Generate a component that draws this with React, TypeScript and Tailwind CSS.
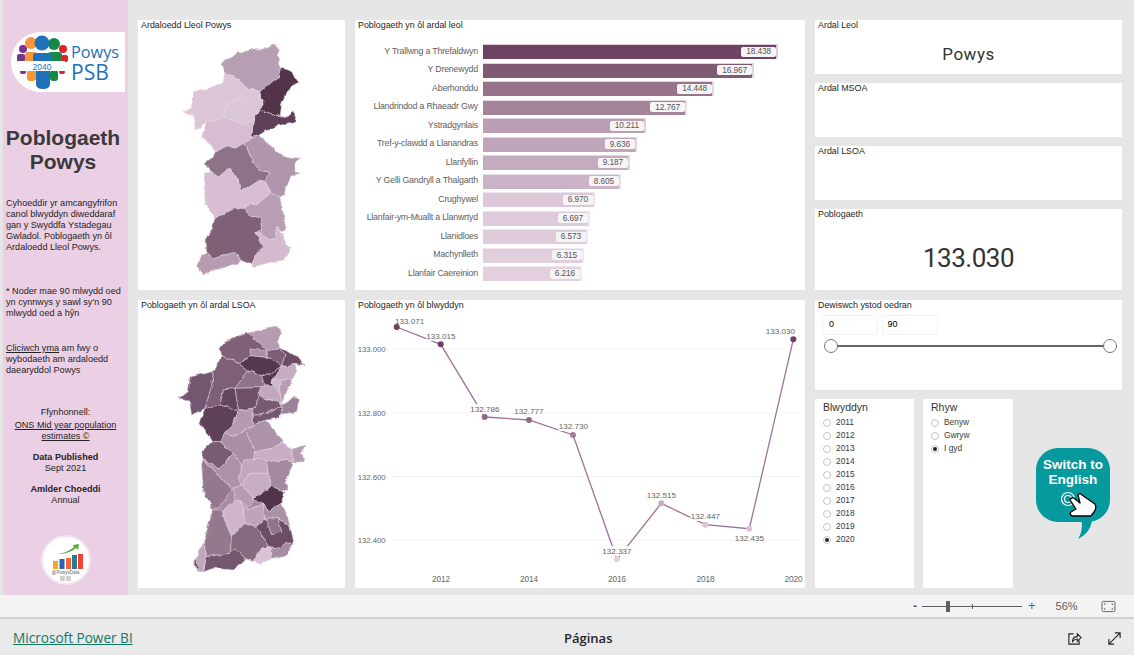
const FONT = "font-['Liberation_Sans',Arial,sans-serif]";

const bars = [
  { name: "Y Trallwng a Threfaldwyn", value: "18.438", end: 295, color: "bg-[#6f4263]", edge: "border-[#dccfd8]" },
  { name: "Y Drenewydd", value: "16.967", end: 271, color: "bg-[#7e5a73]", edge: "border-[#e0d4dd]" },
  { name: "Aberhonddu", value: "14.448", end: 231, color: "bg-[#967389]", edge: "border-[#e4d9e1]" },
  { name: "Llandrindod a Rhaeadr Gwy", value: "12.767", end: 204, color: "bg-[#a58399]", edge: "border-[#e8dfe5]" },
  { name: "Ystradgynlais", value: "10.211", end: 163, color: "bg-[#ba9fb4]", edge: "border-[#e0cfdc]" },
  { name: "Tref-y-clawdd a Llanandras", value: "9.636", end: 154, color: "bg-[#bfa6ba]", edge: "border-[#e2d3de]" },
  { name: "Llanfyllin", value: "9.187", end: 147, color: "bg-[#c4acbf]", edge: "border-[#e4d6e1]" },
  { name: "Y Gelli Gandryll a Thalgarth", value: "8.605", end: 138, color: "bg-[#cab3c6]", edge: "border-[#e7dbe5]" },
  { name: "Crughywel", value: "6.970", end: 112, color: "bg-[#dcc8d8]", edge: "border-[#eee4ec]" },
  { name: "Llanfair-ym-Muallt a Llanwrtyd", value: "6.697", end: 107, color: "bg-[#dfcbdb]", edge: "border-[#efe6ed]" },
  { name: "Llanidloes", value: "6.573", end: 105, color: "bg-[#e0cddc]", edge: "border-[#f0e7ee]" },
  { name: "Machynlleth", value: "6.315", end: 101, color: "bg-[#e1cfdd]", edge: "border-[#f0e8ee]" },
  { name: "Llanfair Caereinion", value: "6.216", end: 99, color: "bg-[#e2d0de]", edge: "border-[#f1e9ef]" },
];

const outline1 =
  "155,70 165,58 195,45 200,38 235,35 245,25 275,28 295,22 315,15 328,30 322,45 330,60 325,70 332,85 345,88 365,95 375,115 390,125 370,135 355,150 345,165 335,195 330,225 345,232 360,225 370,212 378,222 375,245 345,252 320,258 290,270 265,287 290,305 330,345 365,355 392,350 375,370 375,395 392,400 365,405 350,440 345,465 330,475 335,495 345,540 350,570 335,575 320,562 340,585 345,605 362,625 340,660 290,670 250,680 245,672 210,660 205,670 165,680 120,695 100,705 80,680 95,645 110,640 108,600 125,570 135,535 105,490 103,400 125,395 105,368 130,350 135,335 120,310 95,290 110,245 78,270 68,225 38,215 65,205 68,155 110,150 160,125 165,97";

const map1 = [
  ["#b69fb3", "155,70 165,58 195,45 200,38 235,35 245,25 275,28 295,22 315,15 328,30 322,45 330,60 325,70 332,85 325,115 290,140 272,155 235,145 205,120 165,97"],
  ["#533349", "332,85 345,88 365,95 375,115 390,125 370,135 355,150 345,165 335,195 330,228 300,220 268,208 280,185 268,155 290,140 325,115"],
  ["#5f4059", "268,208 300,220 330,230 345,232 360,225 370,212 378,222 375,245 345,252 320,258 290,270 265,287 245,295 250,240"],
  ["#dbc5d6", "38,215 65,205 68,155 110,150 160,125 165,97 205,120 235,145 205,175 170,195 158,235 110,245 78,270 68,225"],
  ["#dcc7d8", "235,145 272,155 268,155 280,185 268,208 250,240 215,257 190,240 158,235 170,195 205,175"],
  ["#d8bdd2", "95,290 110,245 158,235 190,240 215,257 250,240 245,295 225,310 195,325 175,318 135,335 120,310"],
  ["#8e7288", "105,368 130,350 135,335 175,318 195,325 225,310 250,370 270,390 300,398 285,425 270,420 240,440 210,455 205,420 180,385 165,395 145,412 125,395"],
  ["#b096ad", "225,310 245,295 265,287 290,305 330,345 365,355 392,350 375,370 375,395 392,400 365,405 350,440 345,465 330,475 303,457 285,425 300,398 270,390 250,370"],
  ["#d8bed4", "103,400 125,395 145,412 165,395 180,385 205,420 210,455 240,440 270,420 285,425 303,457 260,495 245,490 220,505 195,505 135,535 105,490"],
  ["#b89fb5", "220,505 245,490 260,495 303,457 330,475 335,495 345,540 350,570 335,575 320,562 315,595 295,600 270,580 255,578 275,570 270,530 240,530"],
  ["#7f6077", "135,535 195,505 220,505 240,530 270,530 275,570 255,578 282,620 262,640 245,672 210,660 200,642 175,642 130,658 110,640 108,600 125,570"],
  ["#d4b9cf", "255,578 270,580 295,600 315,595 320,562 340,585 345,605 362,625 340,660 290,670 250,680 245,672 262,640 282,620"],
  ["#b59cb1", "95,645 110,640 130,658 175,642 200,642 210,660 205,670 165,680 120,695 100,705 80,680"],
];

const outline2 =
  "150,70 170,45 225,25 232,25 270,15 325,5 335,25 322,50 330,70 345,75 360,85 385,95 402,120 375,115 380,140 365,165 360,185 345,205 335,240 375,215 388,225 380,260 335,268 320,280 290,285 330,340 345,355 365,375 405,360 395,385 405,410 370,412 345,475 355,495 335,497 345,505 330,535 350,565 360,605 372,655 345,695 305,700 270,715 250,710 225,700 190,735 130,730 100,740 85,740 70,720 85,680 100,655 125,565 130,555 100,500 95,420 100,405 95,380 125,350 120,335 88,290 105,250 65,270 58,225 25,220 55,200 60,155 125,140 130,140 155,92";

const map2 = [
  ["#b59cb1", "232,25 270,15 325,5 335,25 322,50 330,70 290,78 270,58"],
  ["#7f6077", "150,70 170,45 232,25 270,58 290,78 240,90 205,115 155,92"],
  ["#ab90a8", "240,72 290,78 295,98 240,92"],
  ["#7d5c75", "290,78 330,70 345,90 335,122 310,105 295,98"],
  ["#6c4d66", "330,70 345,75 360,85 385,95 402,120 375,115 355,125 335,122 345,90"],
  ["#563850", "205,115 240,92 295,98 310,105 335,122 300,150 275,152 235,138"],
  ["#7e5f77", "155,92 205,115 235,138 210,170 195,190 160,195 150,240 105,250 125,180 130,140"],
  ["#745670", "60,155 130,140 125,180 105,250 65,270 58,225 25,220 55,200"],
  ["#8f738a", "235,138 275,152 285,180 275,188 195,190 210,170"],
  ["#563850", "275,152 300,150 335,122 320,150 305,165 310,185 285,180"],
  ["#c4acc1", "320,150 335,122 355,125 375,115 380,140 365,165 335,165 305,165"],
  ["#cdb7cb", "305,165 335,165 330,205 320,195 310,185"],
  ["#b79cb3", "335,165 365,165 360,185 345,205 335,240 330,205"],
  ["#c0a8bf", "265,195 285,180 310,185 320,195 330,205 335,240 320,225 290,225 265,210"],
  ["#6e4f68", "195,190 275,188 265,195 265,210 260,240 245,250 205,258"],
  ["#64455f", "160,195 195,190 205,258 150,240"],
  ["#785a72", "245,250 260,240 265,210 290,225 320,225 335,245 310,255 270,270 250,270"],
  ["#775871", "250,300 250,270 270,270 310,255 335,245 335,268 320,280 290,285"],
  ["#9c819a", "335,268 335,240 375,215 388,225 380,260"],
  ["#5f4059", "88,290 105,250 150,240 205,258 190,300 165,325 150,350 125,350 120,335"],
  ["#b49bb1", "205,258 245,250 250,300 225,315 195,335 165,325 190,300"],
  ["#ae94aa", "225,315 250,300 290,285 330,340 345,355 340,352 305,370 255,380"],
  ["#a98fa6", "150,350 165,325 195,335 225,315 255,380 250,405 225,405 215,420 190,385"],
  ["#7a5c73", "95,380 125,350 150,350 190,385 150,432 100,405"],
  ["#c7aec5", "255,380 305,370 340,352 365,375 370,412 345,405 290,410 265,400 250,405"],
  ["#b69cb3", "365,375 405,360 395,385 405,410 370,412"],
  ["#93788e", "95,420 100,405 125,430 150,460 190,490 150,545 130,555 100,500"],
  ["#ad93aa", "100,405 150,432 190,385 215,420 205,460 215,480 190,490 150,460 125,430"],
  ["#c2a8bf", "205,460 215,420 225,405 250,405 265,400 290,410 295,445 240,445 215,480"],
  ["#a38aa0", "290,410 345,405 370,412 345,475 355,495 335,497 305,482 295,445"],
  ["#c7aec6", "240,445 295,445 305,482 280,505 250,522 240,505 225,495 215,480"],
  ["#533349", "250,522 305,482 345,505 330,535 300,560 280,535"],
  ["#b69cb3", "190,490 215,480 225,495 240,505 250,522 235,555 215,525 195,525"],
  ["#cfb5cc", "155,555 195,525 215,525 225,595 185,635 165,590"],
  ["#bda4ba", "225,595 215,525 235,555 280,535 285,580 260,605"],
  ["#ab91a7", "300,560 330,535 350,565 360,605 325,578 285,580 280,535"],
  ["#8f7389", "285,580 325,578 335,620 305,630"],
  ["#6c4d66", "260,605 285,580 305,630 335,620 325,578 360,605 372,655 345,655 330,670 295,665"],
  ["#93788e", "130,555 155,555 165,590 185,635 180,685 110,695 100,655 125,565"],
  ["#866a80", "185,635 225,595 260,605 295,665 275,670 250,710 225,700 195,670 180,685"],
  ["#d9c3d6", "250,710 275,670 295,665 305,670 305,700 270,715"],
  ["#a58ca2", "295,665 330,670 345,655 372,655 345,695 305,700 305,670"],
  ["#765770", "110,695 180,685 195,670 225,700 190,735 130,730 100,740"],
  ["#bfa8bc", "85,680 100,655 110,695 100,740 85,740 70,720"],
  ["#5f4059", "80,700 85,740 72,715"],
];

const points = [
  { x: 396.7, y: 327, label: "133.071", lx: 409.7, ly: 321, color: "#6c4263" },
  { x: 440.7, y: 344.3, label: "133.015", lx: 441, ly: 336, color: "#6c4263" },
  { x: 484.7, y: 417, label: "132.786", lx: 485, ly: 409, color: "#8e6a85" },
  { x: 529, y: 420, label: "132.777", lx: 529, ly: 411, color: "#8e6a85" },
  { x: 573, y: 435, label: "132.730", lx: 573.3, ly: 426, color: "#a07f98" },
  { x: 617, y: 559.3, label: "132.337", lx: 617, ly: 551, color: "#e3d3df" },
  { x: 661.3, y: 503.3, label: "132.515", lx: 661.3, ly: 495, color: "#c9afc4" },
  { x: 705.3, y: 524.7, label: "132.447", lx: 705.3, ly: 516, color: "#d9c4d5" },
  { x: 749.3, y: 528.7, label: "132.435", lx: 749.3, ly: 538, color: "#d9c4d5" },
  { x: 793.3, y: 339.3, label: "133.030", lx: 780.3, ly: 331, color: "#6c4263" },
];

const years = ["2011", "2012", "2013", "2014", "2015", "2016", "2017", "2018", "2019", "2020"];

function Card({ title, className, children }: { title: string; className: string; children?: React.ReactNode }) {
  return (
    <div className={`bg-white ${className}`}>
      <div className="pl-[3px] text-[8.9px] leading-[10px] text-[#252423]">{title}</div>
      {children}
    </div>
  );
}

function MapShape({ id, regions, outline, base, w, h }: { id: string; regions: string[][]; outline: string; base: string; w: number; h: number }) {
  return (
    <svg viewBox={`0 0 ${w * 3} ${h * 3}`} width={w} height={h} className="block">
      {/* the county borders are jagged, roughen the straight polygon edges */}
      <filter id={id} x="-5%" y="-5%" width="110%" height="110%" colorInterpolationFilters="sRGB">
        <feTurbulence type="fractalNoise" baseFrequency="0.05" numOctaves="2" seed="4" />
        <feDisplacementMap in="SourceGraphic" scale="12" xChannelSelector="R" yChannelSelector="G" />
      </filter>
      <g filter={`url(#${id})`}>
        <polygon points={outline} fill={base} />
        {regions.map(([fill, pts], i) => (
          <polygon key={i} points={pts} fill={fill} stroke="#e9dfe7" strokeWidth="1.6" strokeLinejoin="round" />
        ))}
      </g>
    </svg>
  );
}

function Radio({ label, on }: { label: string; on?: boolean }) {
  return (
    <div className="flex h-[13px] items-center gap-[5px] text-[8.4px] text-[#3a3a3a]">
      <span className="flex h-[8px] w-[8px] items-center justify-center rounded-full border border-[#c4c4c4] bg-white">
        {on && <span className="h-[4px] w-[4px] rounded-full bg-[#252423]" />}
      </span>
      {label}
    </div>
  );
}

function LineChart() {
  const line = points.map((p) => `${p.x},${p.y}`).join(" ");
  return (
    <svg viewBox="355 320 450 268" width={450} height={268} className="block overflow-visible">
      {[[349, "133.000"], [413, "132.800"], [476.5, "132.600"], [540, "132.400"]].map(([y, t]) => (
        <g key={t}>
          <line x1={392} x2={800} y1={y} y2={y} stroke="#f3f3f3" />
          <text x={385.5} y={Number(y) + 3} textAnchor="end" fontSize="7.7" fill="#666">{t}</text>
        </g>
      ))}
      <polyline points={line} fill="none" stroke="#a0709a" strokeWidth="1.3" />
      {points.map((p) => (
        <rect key={p.label + "b"} x={p.lx - 15} y={p.ly - 5} width={30} height={10} fill="#fff" opacity="0.85" />
      ))}
      {points.map((p) => (
        <circle key={p.label} cx={p.x} cy={p.y} r="3" fill={p.color} />
      ))}
      {points.map((p) => (
        <text key={p.label + "t"} x={p.lx} y={p.ly + 3} textAnchor="middle" fontSize="8.1" fill="#666">{p.label}</text>
      ))}
      {[[441, "2012"], [529, "2014"], [617, "2016"], [705.5, "2018"], [793.5, "2020"]].map(([x, t]) => (
        <text key={t} x={x} y={582} textAnchor="middle" fontSize="8.2" fill="#666">{t}</text>
      ))}
    </svg>
  );
}

function PsbLogo() {
  return (
    <div className="ml-[8px] flex h-[60px] w-[114px] items-center rounded-l-[30px] bg-white">
      <svg viewBox="0 0 58 60" width={58} height={60} className="ml-[3px] shrink-0">
        <circle cx="9" cy="17" r="4" fill="#7b3294" />
        <rect x="3" y="22" width="8" height="8" rx="2" fill="#6e3a80" />
        <rect x="6" y="38" width="6" height="4" rx="2" fill="#7b3294" />
        <circle cx="49" cy="17" r="4" fill="#e2202c" />
        <rect x="47" y="23" width="7" height="7" rx="2" fill="#e2202c" />
        <rect x="45" y="38" width="6" height="4" rx="2" fill="#e2202c" />
        <circle cx="17" cy="11" r="6" fill="#f7953a" />
        <rect x="11" y="20" width="12" height="10" rx="3" fill="#f7953a" />
        <rect x="13" y="38" width="9" height="11" rx="3" fill="#f7953a" />
        <circle cx="40" cy="12" r="6" fill="#168a44" />
        <rect x="34" y="20" width="14" height="10" rx="3" fill="#168a44" />
        <rect x="36" y="38" width="8" height="11" rx="3" fill="#168a44" />
        <circle cx="28" cy="11" r="7.5" fill="#1f72b8" />
        <path d="M19 24 q0 -3 3 -3 h13 q3 0 3 3 v6 h-19z" fill="#1f72b8" />
        <path d="M22 39 h14 v13 q0 5 -7 5 q-7 0 -7 -5z" fill="#1f72b8" />
        <rect x="4" y="29" width="47" height="10" fill="#fff" />
        <text x="28" y="37.5" textAnchor="middle" fontSize="8.5" fill="#1f72b8">2040</text>
      </svg>
      <div className="-ml-[1px] text-[#1f72b8] font-['Open_Sans',sans-serif]">
        <div className="text-[16.3px] leading-[20px]">Powys</div>
        <div className="text-[21px] leading-[20px]">PSB</div>
      </div>
    </div>
  );
}

function DataLogo() {
  return (
    <div className="mx-auto flex h-[50px] w-[50px] flex-col items-center rounded-full border-2 border-[#f3e4ee] bg-white">
      <svg viewBox="0 0 44 30" width={44} height={30} className="mt-[4px]">
        <path d="M13 13 q10 -1 17 -7 l-1 -2 l6 -1 l-1 6 l-2 -2 q-7 6 -19 6z" fill="#5cab3c" />
        <rect x="9" y="20" width="5" height="8" fill="#f5a623" />
        <rect x="15.5" y="18" width="5" height="10" fill="#2f5fae" />
        <rect x="22" y="17" width="5" height="11" fill="#f0673a" />
        <rect x="28" y="14" width="5" height="14" fill="#2d7b8c" />
        <rect x="34" y="13" width="5" height="15" fill="#ef4136" />
      </svg>
      <div className="-mt-[1px] text-[4.5px] leading-[5px] text-[#666]">@PowysData</div>
      <div className="mt-[1px] flex gap-[1px]">
        <span className="h-[5px] w-[5px] bg-[#cfcfcf]" />
        <span className="h-[5px] w-[5px] bg-[#cfcfcf]" />
      </div>
    </div>
  );
}

function SwitchButton() {
  return (
    <div className="relative ml-[14px] mt-[49px] h-[74px] w-[74px] rounded-[22px] bg-[#069a9e] text-center font-bold text-white">
      <div className="pt-[10px] text-[13.5px] leading-[14.5px]">
        Switch to
        <br />
        English
      </div>
      <svg viewBox="0 0 38 28" width={38} height={28} className="absolute left-[24px] top-[43px]">
        <circle cx="8" cy="8" r="6.5" fill="none" stroke="#fff" strokeWidth="1.2" />
        <circle cx="8" cy="8" r="3.5" fill="none" stroke="#fff" strokeWidth="1.2" />
        <path d="M10 9 q1 -3 4 -2 l6 5 l-2 -8 q2 -3 4 0 l13 9 q2 4 -1 8 l-3 4 l-19 0 q-3 -2 -1 -4 l5 -3 z" fill="#fff" stroke="#000" strokeWidth="1.3" strokeLinejoin="round" />
      </svg>
      <svg viewBox="0 0 14 18" width={14} height={18} className="absolute left-[42px] top-[73px]">
        <path d="M3.7 0 H14 Q12 12 0 18 Q5 10 3.7 0z" fill="#069a9e" />
      </svg>
    </div>
  );
}

export default function App() {
  return (
    <div className={`flex h-[655px] w-[1134px] flex-col overflow-hidden bg-[#e6e6e6] ${FONT}`}>
      {/* report page */}
      <div className="flex h-[595px] pl-[3px]">
        <aside className="flex w-[125px] flex-col bg-[#ebd0e5] text-[9.1px] leading-[11px] text-[#252423]">
          <div className="mt-[32px]">
            <PsbLogo />
          </div>
          <h1 className="mt-[34px] pr-[5px] text-center text-[21px] font-bold leading-[24px] text-[#3a3a3a]">
            Poblogaeth
            <br />
            Powys
          </h1>
          <p className="mt-[24px] px-[3px]">
            Cyhoeddir yr amcangyfrifon canol blwyddyn diweddaraf gan y Swyddfa Ystadegau Gwladol. Poblogaeth yn ôl Ardaloedd Lleol Powys.
          </p>
          <p className="mt-[33px] px-[3px]">* Noder mae 90 mlwydd oed yn cynnwys y sawl sy'n 90 mlwydd oed a hŷn</p>
          <p className="mt-[24px] px-[3px]">
            <span className="underline">Cliciwch yma</span> am fwy o wybodaeth am ardaloedd daearyddol Powys
          </p>
          <div className="mt-[31px] text-center">
            <div>Ffynhonnell:</div>
            <div className="mt-[2px] underline">
              ONS Mid year population
              <br />
              estimates ©
            </div>
            <div className="mt-[10px] font-bold">Data Published</div>
            <div>Sept 2021</div>
            <div className="mt-[10px] font-bold">Amlder Choeddi</div>
            <div>Annual</div>
          </div>
          <div className="mt-[29px]">
            <DataLogo />
          </div>
        </aside>

        <main className="ml-[10px] flex pt-[20px]">
          {/* maps */}
          <div className="flex w-[207px] flex-col gap-[10px]">
            <Card title="Ardaloedd Lleol Powys" className="h-[270px]">
              <div className="ml-[32px] mt-[10px]">
                <MapShape id="rough1" regions={map1} outline={outline1} base="#c9b2c5" w={150} h={240} />
              </div>
            </Card>
            <Card title="Poblogaeth yn ôl ardal LSOA" className="h-[288px]">
              <div className="ml-[32px] mt-[15px]">
                <MapShape id="rough2" regions={map2} outline={outline2} base="#a58ca2" w={150} h={250} />
              </div>
            </Card>
          </div>

          {/* charts */}
          <div className="ml-[10px] flex w-[450px] flex-col gap-[10px]">
            <Card title="Poblogaeth yn ôl ardal leol" className="h-[270px]">
              <div className="mt-[14px] flex flex-col gap-[3.5px]">
                {bars.map((b) => (
                  <div key={b.name} className="flex h-[15px] items-center">
                    <div className="w-[123px] shrink-0 text-right text-[8.8px] tracking-[-0.2px] whitespace-nowrap text-[#605e5c]">{b.name}</div>
                    <div className="relative ml-[5px] h-[15px]" style={{ width: b.end }}>
                      <div className={`h-full w-full border-r-2 border-t ${b.color} ${b.edge}`} />
                      <span className="absolute right-[2px] top-[2.5px] flex h-[10px] items-center rounded-[2px] bg-[#f7f4f6] px-[5px] text-[8.3px] tracking-[-0.1px] text-[#555]">
                        {b.value}
                      </span>
                    </div>
                  </div>
                ))}
              </div>
            </Card>
            <Card title="Poblogaeth yn ôl blwyddyn" className="h-[288px]">
              <div className="mt-[10px]">
                <LineChart />
              </div>
            </Card>
          </div>

          {/* right column */}
          <div className="ml-[10px] flex w-[307px] flex-col gap-[9px]">
            <Card title="Ardal Leol" className="h-[54px]">
              <div className="pt-[14px] text-center text-[17px] leading-[20px] tracking-[0.5px] text-[#333] font-['Roboto',sans-serif]">Powys</div>
            </Card>
            <Card title="Ardal MSOA" className="h-[54px]" />
            <Card title="Ardal LSOA" className="h-[54px]" />
            <Card title="Poblogaeth" className="h-[81px]">
              <div className="pt-[23px] text-center text-[26px] leading-[32px] tracking-[-0.5px] text-[#333] font-['Roboto',sans-serif]">133.030</div>
            </Card>
            <Card title="Dewiswch ystod oedran" className="mt-[1px] h-[90px]">
              <div className="ml-[7px] mt-[5px] flex gap-[3.5px]">
                <div className="flex h-[20px] w-[56px] items-center border border-[#f3f3f3] pl-[6px] text-[9px]">0</div>
                <div className="flex h-[20px] w-[56px] items-center border border-[#f3f3f3] pl-[5px] text-[9px]">90</div>
              </div>
              <div className="relative ml-[9px] mt-[4px] flex h-[14px] w-[293px] items-center">
                <div className="h-[2px] w-full bg-[#666]" />
                <span className="absolute left-0 top-0 h-[14px] w-[14px] rounded-full border-[1.5px] border-[#777] bg-white" />
                <span className="absolute right-0 top-0 h-[14px] w-[14px] rounded-full border-[1.5px] border-[#777] bg-white" />
              </div>
            </Card>
            <div className="flex gap-[9px]">
              <div className="h-[189px] w-[99px] bg-white pl-[8px] pt-[1px]">
                <div className="mb-[1px] text-[10.5px] leading-[15px] text-[#333]">Blwyddyn</div>
                {years.map((y) => (
                  <Radio key={y} label={y} on={y === "2020"} />
                ))}
              </div>
              <div className="h-[189px] w-[90px] bg-white pl-[8px] pt-[1px]">
                <div className="mb-[1px] text-[10.5px] leading-[15px] text-[#333]">Rhyw</div>
                <Radio label="Benyw" />
                <Radio label="Gwryw" />
                <Radio label="I gyd" on />
              </div>
              <SwitchButton />
            </div>
          </div>
        </main>
      </div>

      {/* zoom bar */}
      <div className="flex h-[24px] items-center border-b-2 border-[#cfcfcf] bg-[#f3f3f3] pl-[913px] text-[#605e5c]">
        <span className="w-[4px] text-[12px] font-bold">-</span>
        <div className="relative ml-[5px] h-[1px] w-[100px] bg-[#605e5c]">
          <span className="absolute left-[24px] top-[-5px] h-[11px] w-[4px] bg-[#605e5c]" />
          <span className="absolute left-[50px] top-[-2px] h-[5px] w-[1px] bg-[#605e5c]" />
        </div>
        <span className="ml-[6px] text-[13px]">+</span>
        <span className="ml-[20px] text-[11px]">56%</span>
        <svg viewBox="0 0 16 14" width={15} height={13} className="ml-[23px]">
          <rect x="1" y="1.5" width="14" height="11" rx="1.5" fill="none" stroke="#605e5c" />
          <path d="M3.5 5.5 V4 H5 M11 4 H12.5 V5.5 M12.5 8.5 V10 H11 M5 10 H3.5 V8.5" fill="none" stroke="#605e5c" strokeWidth="0.8" />
        </svg>
      </div>

      {/* footer */}
      <footer className="relative flex flex-1 items-center bg-[#eaeaea] pl-[13px] pt-[3px]">
        <a className="text-[13.6px] text-[#117865] underline font-['Open_Sans',sans-serif]">Microsoft Power BI</a>
        <span className="absolute left-[564px] text-[13px] font-semibold text-[#252423] font-['Open_Sans',sans-serif]">Páginas</span>
        <svg viewBox="0 0 16 16" width={15} height={15} className="absolute left-[1067px] fill-none stroke-[#252423]" strokeWidth="1.2">
          <path d="M7 3 H2 V14 H13 V10" />
          <path d="M6 11 q0 -5 5 -5 V3 l4 4 l-4 4 V8.5 q-3 0 -5 2.5z" />
        </svg>
        <svg viewBox="0 0 16 16" width={15} height={15} className="absolute left-[1107px] fill-none stroke-[#252423]" strokeWidth="1.2">
          <path d="M2 14 L14 2 M8.5 2 H14 V7.5 M2 8.5 V14 H7.5" />
        </svg>
      </footer>
    </div>
  );
}
